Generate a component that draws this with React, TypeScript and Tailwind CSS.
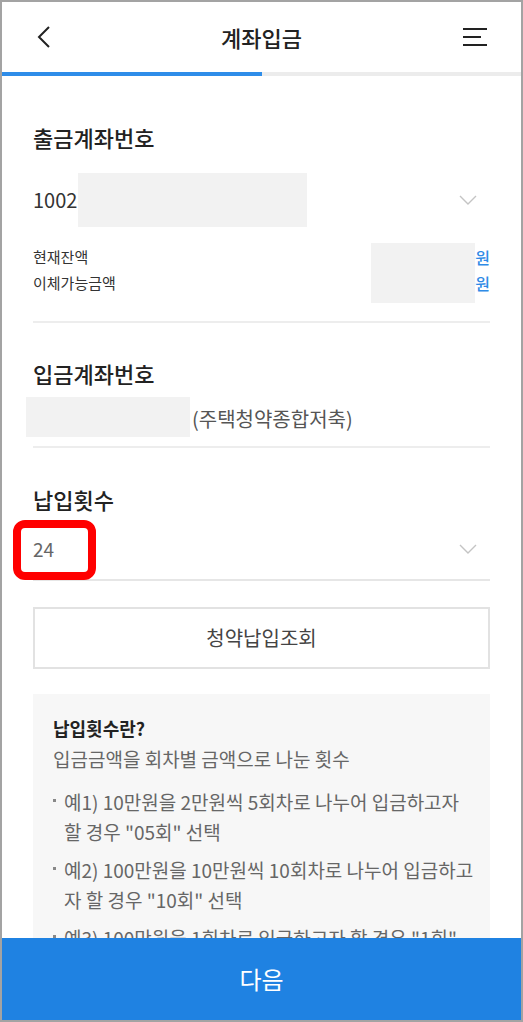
const font = "font-['Noto_Sans_CJK_KR','Noto_Sans',sans-serif]";

function DownArrow() {
  return (
    <svg width="18" height="10" viewBox="0 0 18 10" fill="none">
      <polyline points="1,1 9,9 17,1" stroke="#c4c4c4" strokeWidth="1.4" />
    </svg>
  );
}

function Header() {
  return (
    <div className="relative flex h-[70px] shrink-0 items-center justify-between pl-[35px] pr-[34px]">
      <svg width="14" height="22" viewBox="0 0 14 22" fill="none">
        <polyline points="12,1 2,11 12,21" stroke="#222" strokeWidth="2" />
      </svg>
      <h1 className="absolute left-1/2 -translate-x-1/2 text-[22px] font-medium leading-[30px] text-[#222]">
        계좌입금
      </h1>
      <div className="flex flex-col gap-[5.5px]">
        <span className="block h-[2.5px] w-[24px] bg-[#222]" />
        <span className="block h-[2.5px] w-[18px] bg-[#222]" />
        <span className="block h-[2.5px] w-[24px] bg-[#222]" />
      </div>
    </div>
  );
}

const bullets = [
  '예1) 10만원을 2만원씩 5회차로 나누어 입금하고자 할 경우 "05회" 선택',
  '예2) 100만원을 10만원씩 10회차로 나누어 입금하고자 할 경우 "10회" 선택',
  '예3) 100만원을 1회차로 입금하고자 할 경우 "1회" 선택',
];

export default function App() {
  return (
    <div
      className={`${font} flex h-[1022px] w-[523px] flex-col overflow-hidden border-2 border-[#a3a3a3] bg-white`}
    >
      <Header />

      {/* 진행 바 */}
      <div className="flex h-[4px] shrink-0 bg-[#ececec]">
        <div className="w-[260px] bg-[#2e8de9]" />
      </div>

      <div className="min-h-0 flex-1 overflow-hidden px-[31px]">
        {/* 출금계좌 */}
        <h2 className="mt-[46px] text-[22px] font-medium leading-[30px] text-[#222]">
          출금계좌번호
        </h2>
        <div className="mt-[21px] flex h-[54px] items-center justify-between">
          <div className="flex items-center">
            <div className="w-[45px] whitespace-nowrap text-[20px] leading-[30px] text-[#333]">1002-</div>
            <div className="relative h-[54px] w-[229px] bg-[#f2f2f2]" />
          </div>
          <div className="mr-[13px]">
            <DownArrow />
          </div>
        </div>
        <div className="mt-[16px] flex h-[60px] justify-between">
          <div className="mt-[1px] text-[15px] leading-[26px] text-[#333]">
            <p>현재잔액</p>
            <p>이체가능금액</p>
          </div>
          <div className="flex">
            <div className="relative z-10 -mr-[9px] h-[60px] w-[104px] bg-[#f2f2f2]" />
            <div className="mt-[1px] text-right text-[16px] font-medium leading-[26px] text-[#2f8be6]">
              <p>0원</p>
              <p>0원</p>
            </div>
          </div>
        </div>
        <div className="mt-[18px] h-[2px] bg-[#ededed]" />

        {/* 입금계좌 */}
        <h2 className="mt-[35px] text-[22px] font-medium leading-[30px] text-[#222]">
          입금계좌번호
        </h2>
        <div className="-ml-[7px] mt-[9px] flex h-[40px] items-center">
          <div className="h-[40px] w-[164px] bg-[#f2f2f2]" />
          <span className="ml-[2px] mt-[3px] text-[20px] leading-[30px] text-[#555]">
            (주택청약종합저축)
          </span>
        </div>
        <div className="mt-[9px] h-[2px] bg-[#ededed]" />

        {/* 납입횟수 */}
        <h2 className="mt-[36px] text-[22px] font-medium leading-[30px] text-[#222]">
          납입횟수
        </h2>
        <div className="relative flex h-[65px] items-center justify-between pt-[4px]">
          <span className="text-[19px] leading-[30px] text-[#666]">24</span>
          <div className="mr-[13px]">
            <DownArrow />
          </div>
          <div className="absolute -left-[20px] top-[6px] h-[60px] w-[83px] rounded-[12px] border-[8px] border-[#ff0000]" />
        </div>
        <div className="h-[2px] bg-[#e6e6e6]" />

        <button className="mt-[26px] flex h-[62px] w-full items-center justify-center border-2 border-[#e2e2e2] bg-white text-[20px] text-[#444]">
          청약납입조회
        </button>

        {/* 안내 */}
        <div className="mt-[25px] bg-[#f7f7f7] pl-[20px] pr-[12px] pb-[20px] pt-[21px]">
          <p className="text-[18px] font-bold leading-[26px] text-[#222]">납입횟수란?</p>
          <p className="mt-[3px] text-[19px] leading-[30px] text-[#666]">
            입금금액을 회차별 금액으로 나눈 횟수
          </p>
          <ul className="mt-[13px] flex flex-col gap-[8px]">
            {bullets.map((b) => (
              <li key={b} className="relative pl-[11px] text-[19px] leading-[30px] text-[#666]">
                <span className="absolute left-0 top-[12px] h-[3px] w-[3px] bg-[#888]" />
                {b}
              </li>
            ))}
          </ul>
        </div>
      </div>

      <button className="flex h-[82px] shrink-0 items-center justify-center bg-[#1f82e2] text-[24px] text-white">
        다음
      </button>
    </div>
  );
}
